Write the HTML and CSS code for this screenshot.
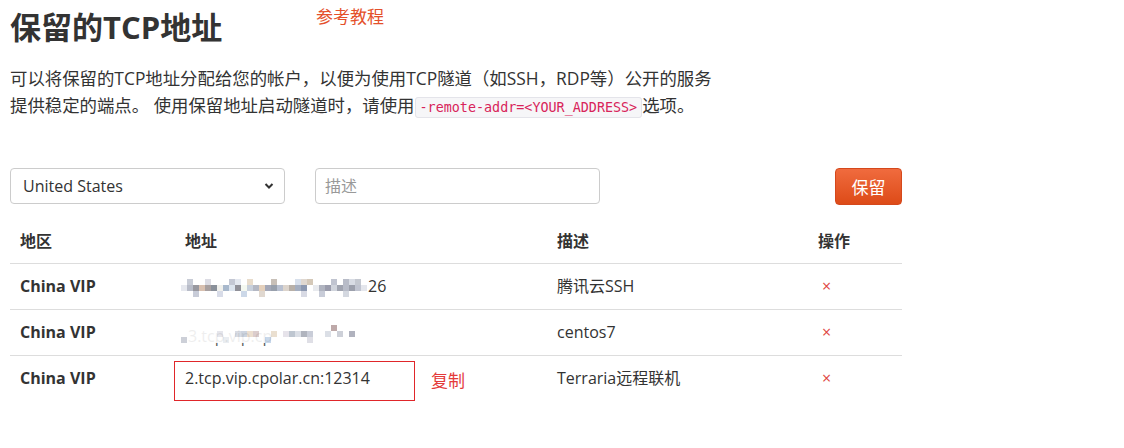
FILE: index.html
```html
<!DOCTYPE html>
<html lang="zh-CN">
<head>
  <meta charset="UTF-8" />
  <title>保留的TCP地址</title>
  <link rel="stylesheet" href="styles.css">
</head>
<body>
  <div class="head">
    <h1>保留的TCP地址</h1>
    <a class="tutorial" href="#">参考教程</a>
  </div>

  <p class="intro">
    可以将保留的TCP地址分配给您的帐户，以便为使用TCP隧道（如SSH，RDP等）公开的服务<br>
    提供稳定的端点。 使用保留地址启动隧道时，请使用<code>-remote-addr=&lt;YOUR_ADDRESS&gt;</code>选项。
  </p>

  <form class="reserve">
    <div class="select-wrap">
      <select id="region">
        <option>United States</option>
        <option>China VIP</option>
      </select>
      <svg class="chev" width="10" height="8" viewBox="0 0 10 8"><path d="M1.5 2 L5 5.5 L8.5 2" fill="none" stroke="#333" stroke-width="2"/></svg>
    </div>
    <input type="text" class="desc" placeholder="描述" />
    <button type="button" class="btn">保留</button>
  </form>

  <table class="addrs">
    <thead>
      <tr>
        <th class="c-region">地区</th>
        <th class="c-addr">地址</th>
        <th class="c-desc">描述</th>
        <th class="c-act">操作</th>
      </tr>
    </thead>
    <tbody>
      <tr>
        <td class="region">China VIP</td>
        <td><span class="mosaic m1"></span><span class="tail">26</span></td>
        <td>腾讯云SSH</td>
        <td><a class="del" href="#">×</a></td>
      </tr>
      <tr>
        <td class="region">China VIP</td>
        <td class="blurred"><span class="under">3.tcp.vip.cp</span><span class="mosaic m2"></span></td>
        <td>centos7</td>
        <td><a class="del" href="#">×</a></td>
      </tr>
      <tr>
        <td class="region">China VIP</td>
        <td class="marked">2.tcp.vip.cpolar.cn:12314<span class="box"></span><span class="copy">复制</span></td>
        <td>Terraria远程联机</td>
        <td><a class="del" href="#">×</a></td>
      </tr>
    </tbody>
  </table>
</body>
</html>
```

FILE: styles.css
```css
body {
  margin: 0;
  padding: 0 10px;
  font-family: "Open Sans", "Noto Sans CJK SC", sans-serif;
  color: #333;
  background: #fff;
}
.head {
  display: flex;
  align-items: flex-start;
  padding-top: 8px;
}
h1 {
  margin: 0;
  width: 306px;
  font-size: 31px;
  line-height: 38px;
  font-weight: bold;
}
.tutorial {
  color: #e4502a;
  font-size: 17px;
  line-height: 18px;
  text-decoration: none;
}
.intro {
  margin: 19px 0 0;
  font-size: 17.4px;
  line-height: 27px;
}
code {
  font-family: "DejaVu Sans Mono", monospace;
  font-size: 13.4px;
  color: #d8245a;
  background: #f6f6f8;
  border: 1px solid #e4e4ea;
  border-radius: 3px;
  padding: 2px 4px;
}
.reserve {
  display: flex;
  align-items: flex-start;
  margin-top: 47px;
  width: 892px;
}
.select-wrap {
  position: relative;
  width: 275px;
}
select {
  appearance: none;
  width: 275px;
  height: 36px;
  border: 1px solid #ccc;
  border-radius: 4px;
  background: #fff;
  padding: 0 12px;
  font-family: inherit;
  font-size: 16px;
  color: #333;
}
.chev {
  position: absolute;
  right: 11px;
  top: 14px;
}
.desc {
  margin-left: 30px;
  width: 285px;
  height: 36px;
  box-sizing: border-box;
  border: 1px solid #ccc;
  border-radius: 4px;
  padding: 0 9px;
  font-family: inherit;
  font-size: 16px;
}
.desc::placeholder {
  color: #999;
}
.btn {
  margin-left: auto;
  width: 67px;
  height: 37px;
  border: 1px solid #d5481c;
  border-radius: 4px;
  background: linear-gradient(#f06b3e, #dd4b18);
  color: #fff;
  font-family: inherit;
  font-size: 17px;
}
.addrs {
  width: 892px;
  border-collapse: collapse;
  margin-top: 14px;
  font-size: 16px;
}
th, td {
  text-align: left;
  padding: 10px 10px;
  line-height: 25px;
}
th {
  font-weight: bold;
  border-bottom: 1px solid #ddd;
  padding-bottom: 9px;
}
tbody tr + tr td {
  border-top: 1px solid #ddd;
}
.c-region { width: 145px; }
.c-addr { width: 352px; }
.c-desc { width: 241px; }
.region {
  font-weight: bold;
}
.mosaic {
  display: inline-block;
  height: 18px;
  vertical-align: middle;
  background-repeat: no-repeat;
  background-size: 100% 6px;
  background-position: 0 0, 0 6px, 0 12px;
  background-image:
    linear-gradient(90deg, #fff 0 6px, #c8ccd6 6px 12px, #fff 12px 24px, #dcdce4 24px 30px, #fff 30px 48px, #c4c8d4 48px 54px, #e4e8f0 54px 60px, #fff 60px 66px, #e8dccc 66px 72px, #fff 72px 90px, #c8c0b8 90px 96px, #fff 96px 114px, #d8e0ec 114px 120px, #e0d8d0 120px 126px, #d4c8b8 126px 132px, #fff 132px 150px, #c0c4d0 150px 156px, #fff 156px 162px, #b8bcc8 162px 168px, #d8dce4 168px 174px, #c4c8d0 174px 180px, #fff 180px),
    linear-gradient(90deg, #e6e8ee 0 6px, #b8bcc8 6px 12px, #98989f 12px 18px, #d8c0b0 18px 24px, #a8a0a0 24px 30px, #8a909a 30px 36px, #f0f0ec 36px 42px, #a8b8cc 42px 48px, #dce4ee 48px 54px, #909098 54px 60px, #f4f8f0 60px 66px, #c8d0dc 66px 72px, #b4b8c4 72px 78px, #e4d0bc 78px 84px, #a4a8b8 84px 90px, #98a0ac 90px 96px, #b8c0d0 96px 102px, #dcd4cc 102px 108px, #b8b0a8 108px 114px, #a4aec0 114px 120px, #8c98b0 120px 126px, #fff 126px 132px, #e8eaee 132px 138px, #b0b4c0 138px 144px, #9a9cac 144px 150px, #d0d4dc 150px 156px, #a0a4b0 156px 162px, #b8bcc8 162px 168px, #9ca0ac 168px 174px, #c0c4d0 174px 180px, #e4e6ec 180px 186px, #fff 186px),
    linear-gradient(90deg, #fff 0 12px, #c8ccd8 12px 18px, #fff 18px 36px, #d8dce8 36px 42px, #fff 42px 60px, #ccd8e8 60px 66px, #fff 66px 78px, #e0d8d0 78px 84px, #fff 84px 120px, #d8dae4 120px 126px, #fff 126px 138px, #c8ccd8 138px 144px, #fff 144px 162px, #d4d8e0 162px 168px, #fff 168px);
}
.m1 {
  width: 190px;
  margin-left: -4px;
}
.m2 {
  width: 192px;
  background-image:
    linear-gradient(90deg, #fff 0 156px, #b8a0a0 156px 162px, #fff 162px),
    linear-gradient(90deg, #fff 0 42px, #e4e4ea 42px 48px, #fff 48px 60px, #d4d8e0 60px 66px, #c8d0dc 66px 72px, #eadccc 72px 78px, #d8c8c8 78px 84px, #fff 84px 96px, #e8dccc 96px 102px, #fff 102px 108px, #e4e0e8 108px 114px, #b8c0cc 114px 120px, #d8dce4 120px 126px, #a8acb8 126px 132px, #c4c8d4 132px 138px, #fff 138px 150px, #d8dce4 150px 156px, #fff 156px 162px, #c8ccd4 162px 168px, #fff 168px 174px, #a8aab8 174px 180px, #fff 180px),
    linear-gradient(90deg, #fff 0 6px, #c8ccd4 6px 12px, #fff 12px 48px, #e8ecf0 48px 54px, #fff 54px 90px, #c4d4e8 90px 96px, #fff 96px 132px, #dcdce4 132px 138px, #fff 138px);
}
.blurred {
  position: relative;
}
.under {
  position: absolute;
  left: 13px;
  top: 14px;
  color: #333;
  opacity: 0.8;
}
.blurred .mosaic {
  position: relative;
  margin-left: -10px;
  opacity: 0.9;
}
.tail {
  margin-left: -3px;
}
.marked {
  position: relative;
}
.box {
  position: absolute;
  left: -1px;
  top: 5px;
  width: 239px;
  height: 38px;
  border: 1px solid #e0262a;
}
.copy {
  position: absolute;
  left: 256px;
  top: 12px;
  color: #e43a3a;
  font-size: 17px;
}
.del {
  color: #e0443e;
  text-decoration: none;
  padding-left: 4px;
  font-size: 16px;
}
```
